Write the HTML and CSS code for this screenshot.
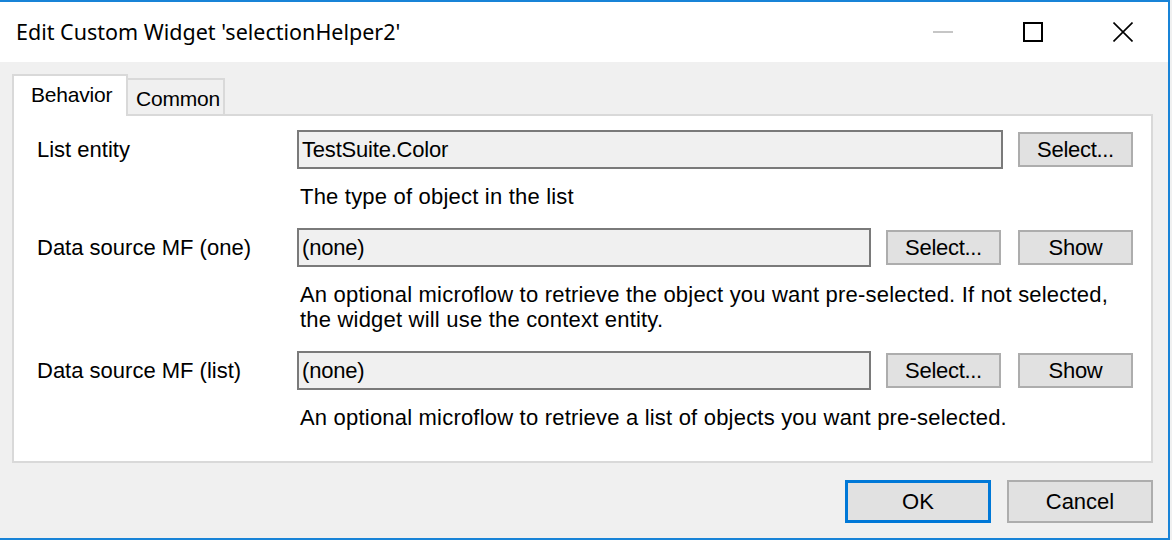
FILE: index.html
```html
<!DOCTYPE html>
<html>
<head>
<meta charset="utf-8">
<title>Edit Custom Widget</title>
<link rel="stylesheet" href="styles.css">
</head>
<body>
<div class="window">
  <div class="titlebar">
    <div class="title">Edit Custom Widget 'selectionHelper2'</div>
    <div class="caption-btns">
      <div class="cbtn"><span class="ico-min"></span></div>
      <div class="cbtn"><span class="ico-max"></span></div>
      <div class="cbtn">
        <svg class="ico-close" width="20" height="20" viewBox="0 0 20 20"><path d="M0.5 0.5 L19.5 19.5 M19.5 0.5 L0.5 19.5" stroke="#000" stroke-width="1.6" fill="none"/></svg>
      </div>
    </div>
  </div>
  <div class="body">
    <div class="tabs">
      <div class="tab active">Behavior</div>
      <div class="tab">Common</div>
    </div>
    <div class="panel">
      <div class="prop">
        <div class="label">List entity</div>
        <div class="fields">
          <div class="input">TestSuite.Color</div>
          <div class="btn">Select...</div>
        </div>
        <div class="desc">The type of object in the list</div>
      </div>
      <div class="prop">
        <div class="label">Data source MF (one)</div>
        <div class="fields">
          <div class="input">(none)</div>
          <div class="btn">Select...</div>
          <div class="btn show">Show</div>
        </div>
        <div class="desc">An optional microflow to retrieve the object you want pre-selected. If not selected,<br>the widget will use the context entity.</div>
      </div>
      <div class="prop">
        <div class="label">Data source MF (list)</div>
        <div class="fields">
          <div class="input">(none)</div>
          <div class="btn">Select...</div>
          <div class="btn show">Show</div>
        </div>
        <div class="desc">An optional microflow to retrieve a list of objects you want pre-selected.</div>
      </div>
    </div>
    <div class="footer">
      <div class="dbtn ok">OK</div>
      <div class="dbtn">Cancel</div>
    </div>
  </div>
</div>
</body>
</html>
```
FILE: styles.css
```css
html, body {
  margin: 0;
  padding: 0;
  background: #f0f0f0;
}
body {
  width: 1172px;
  height: 540px;
  overflow: hidden;
}
.window {
  box-sizing: border-box;
  width: 1170px;
  height: 540px;
  border-top: 2px solid #1883d7;
  border-right: 2px solid #1883d7;
  border-bottom: 2px solid #1883d7;
  display: flex;
  flex-direction: column;
  font-family: "Liberation Sans", Arial, sans-serif;
  font-size: 22px;
  color: #000;
}
.titlebar {
  height: 60px;
  background: #fff;
  display: flex;
  align-items: center;
}
.title {
  flex: 1;
  padding-left: 16px;
  font-family: "Noto Sans", "Open Sans", sans-serif;
  font-size: 21.5px;
  color: #000;
  padding-bottom: 1px;
}
.caption-btns {
  display: flex;
  height: 60px;
}
.cbtn {
  width: 90px;
  height: 60px;
  display: flex;
  align-items: center;
  justify-content: center;
}
.ico-min {
  display: block;
  width: 20px;
  height: 2px;
  background: #c6c6c6;
}
.ico-max {
  display: block;
  box-sizing: border-box;
  width: 20px;
  height: 20px;
  border: 2px solid #000;
}
.ico-close {
  display: block;
}
.body {
  flex: 1;
  display: flex;
  flex-direction: column;
  padding: 12px 15px 15px 12px;
  background: #f0f0f0;
}
.tabs {
  display: flex;
  align-items: flex-end;
  height: 42px;
  margin-bottom: -2px;
  font-size: 21px;
  letter-spacing: -0.2px;
}
.tab {
  box-sizing: border-box;
  width: 97px;
  height: 38px;
  padding: 7px 0 0 8px;
  border: 2px solid #d9d9d9;
  border-left: none;
  border-bottom: none;
  background: #f0f0f0;
  line-height: 24px;
}
.tab.active {
  position: relative;
  z-index: 1;
  height: 42px;
  width: 116px;
  padding: 7px 0 0 17px;
  border-left: 2px solid #d9d9d9;
  background: #fff;
}
.panel {
  flex: 1;
  box-sizing: border-box;
  border: 2px solid #d9d9d9;
  background: #fff;
  padding: 14px 18px 0 23px;
}
.prop {
  display: grid;
  grid-template-columns: 260px 1fr;
  margin-bottom: 19px;
}
.label {
  display: flex;
  align-items: center;
  height: 39px;
  padding-top: 1px;
  box-sizing: border-box;
}
.fields {
  display: flex;
  align-items: center;
  gap: 15px;
}
.input {
  flex: 1;
  box-sizing: border-box;
  height: 39px;
  border: 2px solid #7a7a7a;
  background: #f0f0f0;
  padding: 1px 3px 0;
  display: flex;
  align-items: center;
  letter-spacing: -0.2px;
}
.btn {
  box-sizing: border-box;
  width: 115px;
  height: 35px;
  border: 2px solid #adadad;
  background: #e1e1e1;
  display: flex;
  align-items: center;
  justify-content: center;
  letter-spacing: -0.3px;
}
.btn.show {
  margin-left: 2px;
}
.desc {
  grid-column: 2;
  margin-top: 15px;
  padding-left: 3px;
  line-height: 25px;
  letter-spacing: 0.2px;
}
.footer {
  display: flex;
  justify-content: flex-end;
  gap: 16px;
  margin-top: 17px;
  height: 43px;
}
.dbtn {
  box-sizing: border-box;
  width: 146px;
  height: 43px;
  border: 2px solid #adadad;
  background: #e1e1e1;
  display: flex;
  align-items: center;
  justify-content: center;
}
.dbtn.ok {
  border: 3px solid #0078d7;
}
```
